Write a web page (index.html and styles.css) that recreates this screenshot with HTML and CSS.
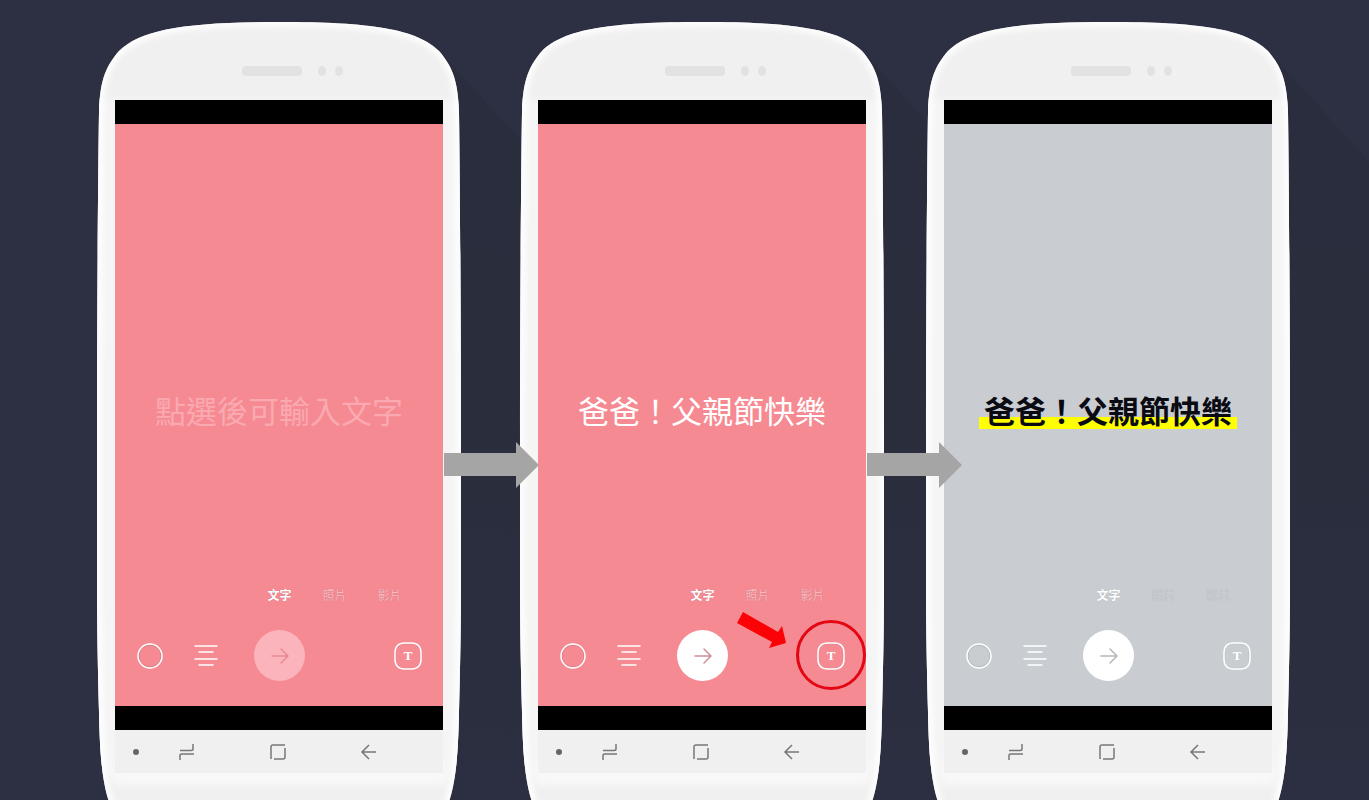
FILE: index.html
```html
<!DOCTYPE html>
<html lang="zh-Hant">
<head>
<meta charset="utf-8">
<title>文字貼文步驟</title>
<link rel="stylesheet" href="styles.css">
</head>
<body>
<svg class="defs" aria-hidden="true">
  <defs>
    <linearGradient id="shade" x1="0" y1="0" x2="0" y2="1">
      <stop offset="0" stop-color="#2a2d3d"/>
      <stop offset="0.5" stop-color="#292d3c"/>
      <stop offset="1" stop-color="#2c2f41"/>
    </linearGradient>
    <filter id="soft" x="-20%" y="-20%" width="140%" height="140%"><feGaussianBlur stdDeviation="3"/></filter>
    <path id="shell" d="M182 0C90 0 44 7 22 29C10 43 3 56 2 90C1 160 0 300 0 420V560C0 610 1 650 2 690C3 740 6 768 16 790C30 825 80 850 182 850C284 850 334 825 348 790C358 768 361 740 362 690C363 650 364 610 364 560V420C364 300 363 160 362 90C361 56 354 43 342 29C320 7 274 0 182 0Z"/>
    <clipPath id="shell-clip"><use href="#shell"/></clipPath>
    <g id="body">
      <path d="M340 26L900 642V800H340Z" fill="url(#shade)"/>
      <use href="#shell" fill="#f0f0f0"/>
      <g clip-path="url(#shell-clip)">
        <rect x="0" y="78" width="364" height="673" fill="#f5f5f5" filter="url(#soft)"/>
        <rect x="14" y="740" width="336" height="24" rx="8" fill="#f8f8f8" filter="url(#soft)"/>
        <use href="#shell" fill="none" stroke="#fff" stroke-width="8" filter="url(#soft)"/>
      </g>
      <rect x="145" y="44" width="60" height="10" rx="4" fill="#e2e2e2"/>
      <ellipse cx="225" cy="49" rx="4" ry="5" fill="#e2e2e2"/>
      <ellipse cx="242" cy="49" rx="4" ry="5" fill="#e2e2e2"/>
    </g>
    <g id="i-color" fill="none"><circle cx="13" cy="13" r="11" stroke="var(--edge)" stroke-opacity="0.6"/><circle cx="13" cy="13" r="12" stroke="#fff" stroke-width="1.5"/></g>
    <g id="i-frame" fill="none"><path d="M11 1.8H17C23.500 1.800 26.200 4.500 26.200 11V17C26.200 23.500 23.500 26.200 17 26.200H11C4.500 26.200 1.800 23.500 1.800 17V11C1.800 4.500 4.500 1.800 11 1.800Z" stroke="var(--edge)" stroke-opacity="0.4"/><path d="M11 1H17C24 1 27 4 27 11V17C27 24 24 27 17 27H11C4 27 1 24 1 17V11C1 4 4 1 11 1Z" stroke="#fff" stroke-width="1.500"/></g>
    <g id="i-align" fill="none" stroke="#fff" stroke-width="1.5" stroke-linecap="round"><path d="M1 2H23M5 8H19M1 15H23M5 21H19"/></g>
    <g id="i-go" fill="none" stroke="currentColor" stroke-width="1.5" stroke-linecap="round" stroke-linejoin="round"><path d="M2 10H18M11 3L18 10L11 17"/></g>
    <g id="i-recent" fill="none" stroke="#777" stroke-width="1.5"><path d="M2 7.500H13Q15 7.500 15 6V1M16 11H4Q2 11 2 12.500V17"/></g>
    <g id="i-home" fill="none" stroke="#777" stroke-width="1.5"><path d="M16 2H4Q2 2 2 4V16M5 16H14Q16 16 16 14V5"/></g>
    <g id="i-back" fill="none" stroke="#777" stroke-width="1.5"><path d="M16 9H2M9 2L2 9L9 16"/></g>
  </defs>
</svg>

<main class="stage">
  <section class="phone phone-1">
    <svg class="shell" aria-hidden="true"><use href="#body"/></svg>
    <div class="screen">
      <div class="app">
        <input class="message" type="text" placeholder="點選後可輸入文字" aria-label="文字內容">
        <nav class="tabs"><button class="tab active">文字</button><button class="tab">照片</button><button class="tab">影片</button></nav>
        <div class="controls">
          <div class="tools">
            <button class="tool" aria-label="顏色"><svg width="26" height="26"><use href="#i-color"/></svg></button>
            <button class="tool" aria-label="對齊"><svg width="24" height="24"><use href="#i-align"/></svg></button>
          </div>
          <button class="go waiting" aria-label="下一步"><svg width="20" height="20"><use href="#i-go"/></svg></button>
          <button class="style" aria-label="文字樣式"><svg width="28" height="28"><use href="#i-frame"/></svg><span>T</span></button>
        </div>
      </div>
      <nav class="keys">
        <span class="dot"></span>
        <button class="key" aria-label="最近"><svg width="18" height="18"><use href="#i-recent"/></svg></button>
        <button class="key" aria-label="主畫面"><svg width="18" height="18"><use href="#i-home"/></svg></button>
        <button class="key" aria-label="返回"><svg width="18" height="18"><use href="#i-back"/></svg></button>
      </nav>
    </div>
    <svg class="next" viewBox="0 0 95 46" aria-hidden="true"><path d="M0 11H72V0L95 23L72 46V34H0Z" fill="#a5a5a5"/></svg>
  </section>

  <section class="phone phone-2">
    <svg class="shell" aria-hidden="true"><use href="#body"/></svg>
    <div class="screen">
      <div class="app">
        <input class="message" type="text" value="爸爸！父親節快樂" aria-label="文字內容">
        <nav class="tabs"><button class="tab active">文字</button><button class="tab">照片</button><button class="tab">影片</button></nav>
        <div class="controls">
          <div class="tools">
            <button class="tool" aria-label="顏色"><svg width="26" height="26"><use href="#i-color"/></svg></button>
            <button class="tool" aria-label="對齊"><svg width="24" height="24"><use href="#i-align"/></svg></button>
          </div>
          <button class="go" aria-label="下一步"><svg width="20" height="20"><use href="#i-go"/></svg></button>
          <button class="style" aria-label="文字樣式"><svg width="28" height="28"><use href="#i-frame"/></svg><span>T</span></button>
        </div>
        <svg class="callout" viewBox="0 0 138 100" aria-hidden="true">
          <path d="M7 17L13 6L48 26L52 20L56 37L39 42L42 36Z" fill="#fb0207"/>
          <circle cx="101" cy="49" r="33.5" fill="none" stroke="#e30613" stroke-width="3"/>
        </svg>
      </div>
      <nav class="keys">
        <span class="dot"></span>
        <button class="key" aria-label="最近"><svg width="18" height="18"><use href="#i-recent"/></svg></button>
        <button class="key" aria-label="主畫面"><svg width="18" height="18"><use href="#i-home"/></svg></button>
        <button class="key" aria-label="返回"><svg width="18" height="18"><use href="#i-back"/></svg></button>
      </nav>
    </div>
    <svg class="next" viewBox="0 0 95 46" aria-hidden="true"><path d="M0 11H72V0L95 23L72 46V34H0Z" fill="#a5a5a5"/></svg>
  </section>

  <section class="phone phone-3">
    <svg class="shell" aria-hidden="true"><use href="#body"/></svg>
    <div class="screen">
      <div class="app gray">
        <input class="message marked" type="text" value="爸爸！父親節快樂" aria-label="文字內容">
        <nav class="tabs"><button class="tab active">文字</button><button class="tab">照片</button><button class="tab">影片</button></nav>
        <div class="controls">
          <div class="tools">
            <button class="tool" aria-label="顏色"><svg width="26" height="26"><use href="#i-color"/></svg></button>
            <button class="tool" aria-label="對齊"><svg width="24" height="24"><use href="#i-align"/></svg></button>
          </div>
          <button class="go" aria-label="下一步"><svg width="20" height="20"><use href="#i-go"/></svg></button>
          <button class="style" aria-label="文字樣式"><svg width="28" height="28"><use href="#i-frame"/></svg><span>T</span></button>
        </div>
      </div>
      <nav class="keys">
        <span class="dot"></span>
        <button class="key" aria-label="最近"><svg width="18" height="18"><use href="#i-recent"/></svg></button>
        <button class="key" aria-label="主畫面"><svg width="18" height="18"><use href="#i-home"/></svg></button>
        <button class="key" aria-label="返回"><svg width="18" height="18"><use href="#i-back"/></svg></button>
      </nav>
    </div>
  </section>
</main>
</body>
</html>
```

FILE: styles.css
```css
* { box-sizing: border-box; }

body {
  margin: 0;
  background: #2d3042;
  font-family: "Noto Sans CJK TC", sans-serif;
}

button {
  padding: 0;
  border: 0;
  background: none;
  font: inherit;
  color: inherit;
}

svg { display: block; }

.defs {
  position: absolute;
  width: 0;
  height: 0;
}

.stage {
  display: grid;
  grid-template-columns: 97fr 364px 59fr 364px 42fr 364px 79fr;
  height: 100vh;
  padding-top: 22px;
  overflow: hidden;
}

.phone {
  position: relative;
  padding: 78px 18px 0;
}

.phone-1 { grid-column: 2; }
.phone-2 { grid-column: 4; }
.phone-3 { grid-column: 6; }

.shell {
  position: absolute;
  inset: 0;
  width: 100%;
  height: 850px;
  overflow: visible;
}

.screen { position: relative; }

.app {
  --paper: #f68a93;
  --soft: #fbb9bf;
  --edge: #b9777f;
  position: relative;
  display: flex;
  flex-direction: column;
  align-items: center;
  height: 630px;
  border: solid #000;
  border-width: 24px 0;
  background: var(--paper);
}

.app.gray {
  --paper: #c9cdd2;
  --soft: #cdd0d4;
  --edge: #a2a6ab;
}

.message {
  width: 258px;
  height: 48px;
  margin: 262px 0 151px;
  padding: 0;
  border: 0;
  background: none;
  color: #fff;
  font: 31px/48px "Noto Sans CJK TC", sans-serif;
  text-align: center;
}

.message::placeholder {
  color: #faa9b0;
  opacity: 1;
}

.message.marked {
  background: linear-gradient(#ff0, #ff0) 0 31px / 100% 12px no-repeat;
  color: #0a0a12;
  font-weight: 700;
}

.tabs {
  display: flex;
  align-self: flex-start;
  padding-left: calc(50% - 27px);
}

.tab {
  width: 55px;
  color: var(--soft);
  font-size: 12px;
  line-height: 20px;
  text-shadow: 0 0 1px var(--edge);
}

.tab.active {
  color: #fff;
  font-weight: 700;
}

.controls {
  display: grid;
  grid-template-columns: 1fr auto 1fr;
  align-items: center;
  width: 100%;
  margin-top: 25px;
  padding: 0 21px 0 22px;
}

.tools {
  display: flex;
  align-items: center;
  gap: 31px;
}

.go {
  display: grid;
  place-items: center;
  width: 51px;
  height: 51px;
  border-radius: 50%;
  background: #fff;
  color: #d08e95;
}

.go.waiting {
  background: #fbb4bb;
  color: #e98b94;
}

.gray .go { color: #b4b7bb; }

.style {
  display: grid;
  place-items: center;
  justify-self: end;
  color: #fff;
  font: bold 13px/28px "Liberation Serif", serif;
}

.style > * { grid-area: 1 / 1; }

.callout {
  position: absolute;
  right: -2px;
  bottom: 0;
  width: 138px;
  height: 100px;
}

.keys {
  display: grid;
  grid-template-columns: 26px 1fr 1fr 1fr 28px;
  align-items: center;
  height: 43px;
  background: #f0f0f0;
}

.dot {
  justify-self: end;
  width: 6px;
  height: 6px;
  margin-right: 2px;
  border-radius: 50%;
  background: #666;
}

.key {
  display: grid;
  place-items: center;
}

.next {
  position: absolute;
  z-index: 2;
  top: 420px;
  left: calc(100% - 17px);
  width: 95px;
  height: 46px;
}
```
